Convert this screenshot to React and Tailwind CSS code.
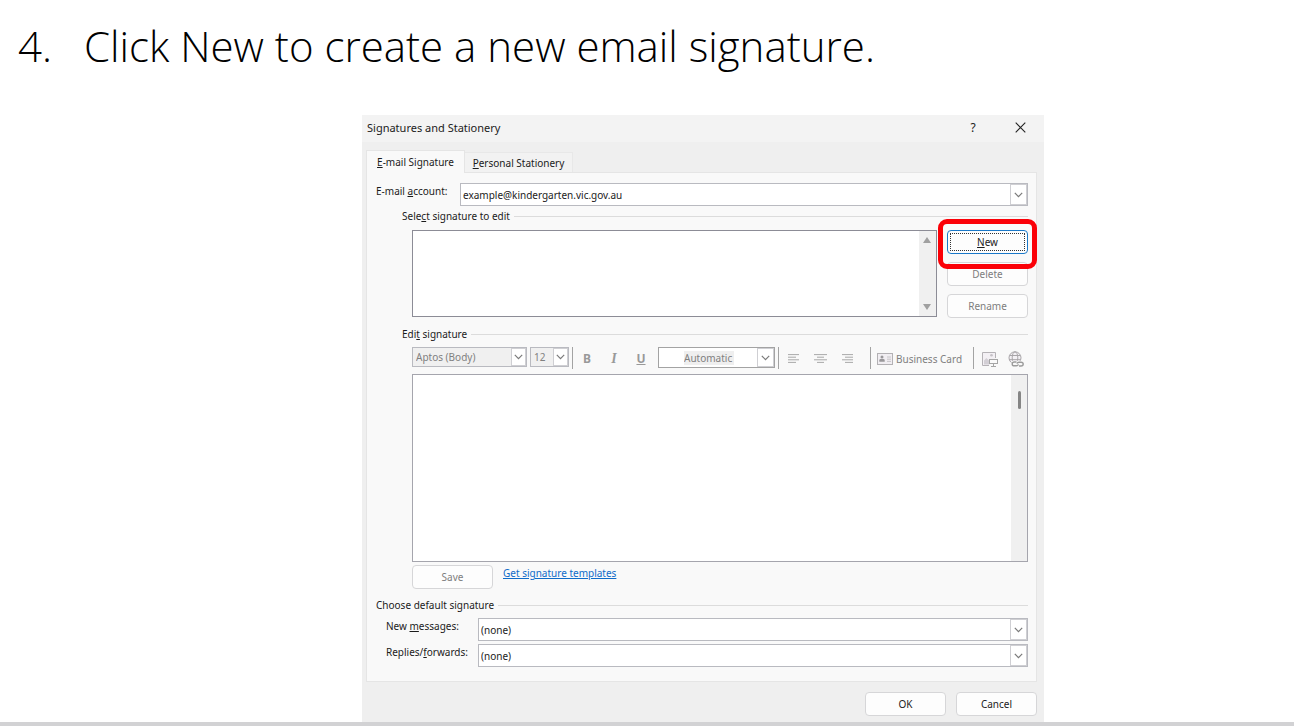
import React, { useState } from "react";

const Chevron = () => (
    <svg viewBox="0 0 9 6" className="w-[9px] h-[6px]" fill="none" stroke="#7a7a7a" strokeWidth="1.2">
        <path d="M0.8 0.8 L4.5 4.6 L8.2 0.8" />
    </svg>
);

// Native select with a boxed chevron on its right edge
const Dropdown = ({ className, selectClassName, boxClassName = "w-[17px]", options, ...props }) => (
    <div className={`relative border ${className}`}>
        <select {...props} className={`block w-full h-full appearance-none outline-none rounded-none ${selectClassName}`}>
            {options.map((option) => (
                <option key={option}>{option}</option>
            ))}
        </select>
        <span className={`absolute inset-y-0 right-0 flex items-center justify-center bg-white border border-[#cfcfd3] pointer-events-none ${boxClassName}`}>
            <Chevron />
        </span>
    </div>
);

const DialogButton = ({ className = "border-[#d6d6d8]", children, ...props }) => (
    <button type="button" {...props} className={`w-[81px] h-6 rounded-[4px] border bg-[#fdfdfd] disabled:text-[#7d7d7d] ${className}`}>
        {children}
    </button>
);

const GroupTitle = ({ className, children }) => (
    <div className={`flex items-center gap-1 h-4 ${className}`}>
        <h3>{children}</h3>
        <span className="flex-1 h-px bg-[#dcdcdc]" />
    </div>
);

const Separator = ({ className }) => <span className={`w-px h-[22px] bg-[#a3a3a3] ${className}`} />;

const AlignIcon = ({ lines }) => (
    <svg viewBox="0 0 13 9" className="w-[13px] h-[9px]" stroke="#a9a9a9" strokeWidth="1">
        {lines.map(([start, end], i) => (
            <path key={i} d={`M${start} ${i * 2.6 + 0.6} H${end}`} />
        ))}
    </svg>
);

const CardIcon = () => (
    <svg viewBox="0 0 16 12" className="w-4 h-3" fill="none" stroke="#b3b1b4">
        <rect x="0.5" y="0.5" width="15" height="11" fill="#f1eef2" />
        <circle cx="5" cy="4" r="1.5" fill="#9a989b" stroke="none" />
        <path d="M2.3 8.8 V7.4 Q2.3 6 3.7 6 H6.3 Q7.7 6 7.7 7.4 V8.8 Z" fill="#9a989b" stroke="none" />
        <path d="M10 4 H14 M10 6.2 H14 M10 8.4 H14" stroke="#c2bfc3" strokeWidth="0.9" />
    </svg>
);

const PictureIcon = () => (
    <svg viewBox="0 0 17 16" className="w-[17px] h-4" fill="none" stroke="#b5b2b6">
        <path d="M8 14.5 H1.5 V1.5 H14.5 V7" fill="#f3f0f4" />
        <path d="M3 13.5 V9.4 L5.4 7 L8 9.4 V13.5 Z" fill="#d3cfd5" stroke="none" />
        <circle cx="10.5" cy="4.3" r="1.3" fill="#c5c1c6" stroke="none" />
        <rect x="8.5" y="8.5" width="8" height="4" fill="#fafafa" stroke="#a5a5a5" />
        <path d="M12.5 12.5 V15 M10 15.5 H15" stroke="#a5a5a5" />
    </svg>
);

const LinkIcon = () => (
    <svg viewBox="0 0 16 16" className="w-4 h-4" fill="none" stroke="#a8a5a8">
        <circle cx="7" cy="6.8" r="6" fill="#f3f0f4" />
        <ellipse cx="7" cy="6.8" rx="2.8" ry="6" />
        <path d="M1.6 4.5 H12.4 M1.2 8.7 H12.6" />
        <rect x="3.5" y="9.8" width="12.5" height="6.2" fill="#f9f9f9" stroke="none" />
        <path d="M8.5 11 H6.4 Q4.2 11 4.2 12.9 Q4.2 14.8 6.4 14.8 H8.4 Q10 14.8 10.4 13.4" stroke="#9c9c9c" strokeWidth="1.4" />
        <path d="M11 15 H13 Q15.2 15 15.2 13.1 Q15.2 11.2 13 11.2 H11 Q9.4 11.2 9 12.6" stroke="#9c9c9c" strokeWidth="1.4" />
    </svg>
);

const Toolbar = () => (
    <div className="flex items-start mt-[5px] ml-9 h-[27px] text-[#808080]">
        <Dropdown
            disabled
            aria-label="Font"
            options={["Aptos (Body)"]}
            className="w-[115px] h-5 border-[#b9bac0]"
            selectClassName="bg-[#f0f0f0] pl-[3px]"
            boxClassName="w-[15px]"
        />
        <Dropdown
            disabled
            aria-label="Font size"
            options={["12"]}
            className="w-[39px] h-5 ml-[3px] border-[#b9bac0]"
            selectClassName="bg-[#f0f0f0] pl-[3px]"
            boxClassName="w-[15px]"
        />
        <Separator className="ml-[3px]" />
        <div className="flex items-center h-[23px] ml-[6px] gap-[11px] text-[12px] text-[#999]">
            <button type="button" disabled aria-label="Bold" className="w-4 font-bold">B</button>
            <button type="button" disabled aria-label="Italic" className="w-4 font-bold italic font-['Liberation_Serif',serif] text-[14px]">I</button>
            <button type="button" disabled aria-label="Underline" className="w-4 font-bold underline">U</button>
        </div>
        <Dropdown
            disabled
            aria-label="Font colour"
            options={["Automatic"]}
            className="w-[117px] h-[21px] ml-[9px] border-[#a3a3a3]"
            selectClassName="pl-[25px] bg-white bg-[linear-gradient(#efefef,#efefef)] bg-[length:50px_14px] bg-[position:25px_3px] bg-no-repeat"
        />
        <Separator className="ml-[3px]" />
        <div className="flex items-center h-[23px] ml-2 gap-[14px]">
            <button type="button" disabled aria-label="Align left">
                <AlignIcon lines={[[1, 12], [1, 9], [1, 12], [1, 9]]} />
            </button>
            <button type="button" disabled aria-label="Align centre">
                <AlignIcon lines={[[0, 13], [3, 10], [0, 13], [3, 10]]} />
            </button>
            <button type="button" disabled aria-label="Align right">
                <AlignIcon lines={[[1, 12], [4, 12], [1, 12], [4, 12]]} />
            </button>
        </div>
        <Separator className="ml-4" />
        <button type="button" disabled className="flex items-center gap-[3px] h-[23px] ml-[6px] whitespace-nowrap">
            <CardIcon />
            Business Card
        </button>
        <Separator className="ml-auto" />
        <div className="flex items-center h-[23px] ml-[7px] gap-[10px] mr-[4px]">
            <button type="button" disabled aria-label="Picture"><PictureIcon /></button>
            <button type="button" disabled aria-label="Hyperlink"><LinkIcon /></button>
        </div>
    </div>
);

const SignatureDialog = () => {
    const [tab, setTab] = useState("signature");
    const [content, setContent] = useState("");

    return (
        <section className="w-full max-w-[682px] bg-[#efefef] text-[10px] leading-4 text-[#1b1b1b]">
            <header className="flex items-center h-[27px] pb-[2px] pl-[5px] pr-[18px] bg-[#f3f3f3]">
                <h2 className="text-[11px]">Signatures and Stationery</h2>
                <button type="button" aria-label="Help" className="ml-auto w-4 text-[12px]">?</button>
                <button type="button" aria-label="Close" className="ml-[34px]">
                    <svg viewBox="0 0 11 11" className="w-[11px] h-[11px]" stroke="#222" strokeWidth="1.1">
                        <path d="M0.7 0.7 L10.3 10.3 M10.3 0.7 L0.7 10.3" />
                    </svg>
                </button>
            </header>

            <div className="pl-1 pr-[7px] pt-2">
                <div role="tablist" className="flex items-end">
                    <button type="button" role="tab" aria-selected={tab === "signature"} onClick={() => setTab("signature")} className="w-[99px] h-[23px] -mb-px bg-[#f9f9f9] border border-b-0 border-[#e5e5e5]">
                        <u>E</u>-mail Signature
                    </button>
                    <button type="button" role="tab" aria-selected={tab === "stationery"} onClick={() => setTab("stationery")} className="w-[108px] h-5 bg-[#f2f2f2] border border-l-0 border-b-0 border-[#e8e8e8]">
                        <u>P</u>ersonal Stationery
                    </button>
                </div>

                <div className="bg-[#f9f9f9] border border-[#e5e5e5] pt-[10px] pl-[9px] pr-2 pb-[14px]">
                    <div className="flex items-start">
                        <label htmlFor="account" className="w-[84px]">E-mail <u>a</u>ccount:</label>
                        <Dropdown id="account" options={["example@kindergarten.vic.gov.au"]} className="flex-1 h-[23px] border-[#b9bac0]" selectClassName="bg-white pl-[2px]" />
                    </div>

                    <GroupTitle className="ml-[26px] mt-[2px]">Sele<u>c</u>t signature to edit</GroupTitle>
                    <div className="flex mt-[6px] ml-9 gap-[10px]">
                        <div className="flex flex-1 h-[87px] bg-white border border-[#8c8c96]">
                            <select size={4} aria-label="Select signature to edit" className="flex-1 appearance-none outline-none bg-white" />
                            <div className="w-[17px] flex flex-col items-center justify-between py-[6px] pr-px bg-[#f0f0f0]">
                                <svg viewBox="0 0 8 6" className="w-2 h-[6px]" fill="#a0a0a0"><path d="M4 0 L8 6 H0 Z" /></svg>
                                <svg viewBox="0 0 8 6" className="w-2 h-[6px]" fill="#a0a0a0"><path d="M0 0 H8 L4 6 Z" /></svg>
                            </div>
                        </div>
                        <div className="relative flex flex-col gap-2">
                            <DialogButton className="border-[#1a78c8] p-[2px]">
                                <span className="flex items-center justify-center h-full border border-dotted border-[#333]">
                                    <span><u>N</u>ew</span>
                                </span>
                            </DialogButton>
                            <DialogButton disabled>Delete</DialogButton>
                            <DialogButton disabled>Rename</DialogButton>
                            {/* Highlight around the New button */}
                            <span className="absolute -inset-x-[9px] -top-[11px] h-[50px] border-[5px] border-[#fb0007] rounded-[9px] pointer-events-none" />
                        </div>
                    </div>

                    <GroupTitle className="ml-[26px] mt-2">Edi<u>t</u> signature</GroupTitle>
                    <Toolbar />
                    <div className="flex ml-9 h-[188px] bg-white border border-[#a5a5ad]">
                        <textarea
                            aria-label="Edit signature"
                            value={content}
                            onChange={(e) => setContent(e.target.value)}
                            className="flex-1 resize-none outline-none p-1"
                        />
                        <div className="w-4 flex justify-center pt-4 bg-[#f0f0f0]">
                            <span className="w-[3px] h-[18px] rounded-full bg-[#858585]" />
                        </div>
                    </div>

                    <div className="flex items-start gap-[10px] mt-[3px] ml-9">
                        <DialogButton disabled>Save</DialogButton>
                        <a href="#templates" className="text-[#0f6cc9] underline">Get signature templates</a>
                    </div>

                    <GroupTitle className="mt-2">Choose default signature</GroupTitle>
                    <div className="flex flex-col gap-[3px] mt-[5px] pl-[10px]">
                        <div className="flex items-start">
                            <label htmlFor="new-messages" className="w-[92px]">New <u>m</u>essages:</label>
                            <Dropdown id="new-messages" options={["(none)"]} className="flex-1 h-[23px] border-[#b9bac0]" selectClassName="bg-white pl-[2px]" />
                        </div>
                        <div className="flex items-start">
                            <label htmlFor="replies" className="w-[92px]">Replies/<u>f</u>orwards:</label>
                            <Dropdown id="replies" options={["(none)"]} className="flex-1 h-[23px] border-[#b9bac0]" selectClassName="bg-white pl-[2px]" />
                        </div>
                    </div>
                </div>
            </div>

            <footer className="flex justify-end gap-[10px] pt-[10px] pb-[6px] pr-[7px]">
                <DialogButton>OK</DialogButton>
                <DialogButton>Cancel</DialogButton>
            </footer>
        </section>
    );
};

export default function App() {
    return (
        <main className="min-h-screen flex flex-col bg-white border-b-4 border-[#d2d2d4] font-['Noto_Sans','Open_Sans',sans-serif]">
            <h1 className="flex pt-4 pl-[18px] mb-[39px] text-[42px] leading-[60px] font-light text-black font-['Open_Sans','Noto_Sans',sans-serif]">
                <span className="w-[66px]">4.</span>
                <span>Click New to create a new email signature.</span>
            </h1>
            <div className="flex justify-center pl-[112px]">
                <SignatureDialog />
            </div>
        </main>
    );
}
